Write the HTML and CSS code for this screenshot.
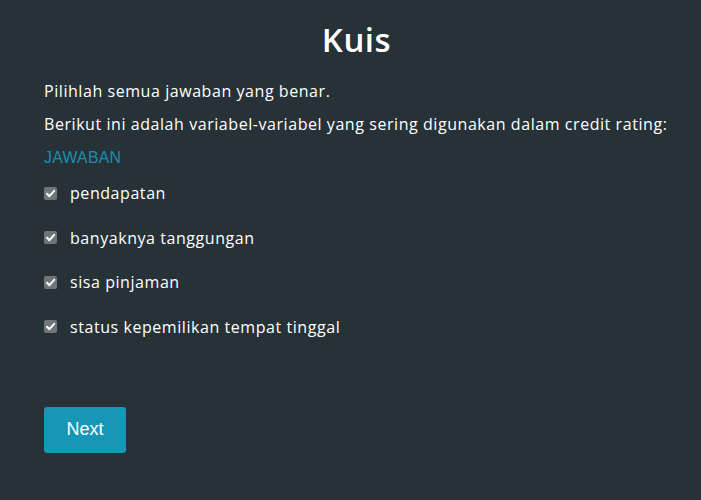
FILE: index.html
```html
<!DOCTYPE html>
<html lang="id">
<head>
<meta charset="utf-8">
<title>Kuis</title>
<link rel="stylesheet" href="styles.css">
</head>
<body>
<main class="quiz">
  <h1 class="title">Kuis</h1>
  <p class="text">Pilihlah semua jawaban yang benar.</p>
  <p class="text">Berikut ini adalah variabel-variabel yang sering digunakan dalam credit rating:</p>
  <div class="answer-label">JAWABAN</div>
  <ul class="options">
    <li class="option"><span class="check"><svg viewBox="0 0 13 13" width="13" height="13"><path d="M3 6.8 L5.4 9.2 L10.2 3.8" fill="none" stroke="#fff" stroke-width="2" stroke-linecap="round" stroke-linejoin="round"/></svg></span><span>pendapatan</span></li>
    <li class="option"><span class="check"><svg viewBox="0 0 13 13" width="13" height="13"><path d="M3 6.8 L5.4 9.2 L10.2 3.8" fill="none" stroke="#fff" stroke-width="2" stroke-linecap="round" stroke-linejoin="round"/></svg></span><span>banyaknya tanggungan</span></li>
    <li class="option"><span class="check"><svg viewBox="0 0 13 13" width="13" height="13"><path d="M3 6.8 L5.4 9.2 L10.2 3.8" fill="none" stroke="#fff" stroke-width="2" stroke-linecap="round" stroke-linejoin="round"/></svg></span><span>sisa pinjaman</span></li>
    <li class="option"><span class="check"><svg viewBox="0 0 13 13" width="13" height="13"><path d="M3 6.8 L5.4 9.2 L10.2 3.8" fill="none" stroke="#fff" stroke-width="2" stroke-linecap="round" stroke-linejoin="round"/></svg></span><span>status kepemilikan tempat tinggal</span></li>
  </ul>
  <button class="next" type="button">Next</button>
</main>
</body>
</html>
```

FILE: styles.css
```css
html, body {
  margin: 0;
  padding: 0;
  background: #263238;
}
body {
  font-family: "Open Sans", "DejaVu Sans", sans-serif;
  color: #ffffff;
}
.quiz {
  padding: 16px 32px 0 44px;
}
.title {
  margin: 0 0 15px;
  text-align: center;
  font-size: 33px;
  line-height: 48px;
  font-weight: 600;
  letter-spacing: 0.5px;
}
.text {
  margin: 0 0 9px;
  font-size: 16px;
  line-height: 24px;
  font-weight: 500;
  letter-spacing: 0.56px;
  white-space: nowrap;
}
.answer-label {
  margin-top: 12px;
  font-family: "Liberation Sans", Arial, sans-serif;
  font-size: 15.8px;
  line-height: 20px;
  color: #1a8fad;
  letter-spacing: 0.3px;
}
.options {
  list-style: none;
  margin: 13px 0 0;
  padding: 0;
  display: flex;
  flex-direction: column;
  gap: 20.5px;
}
.option {
  display: flex;
  align-items: center;
  gap: 13px;
  font-size: 16px;
  line-height: 24px;
  font-weight: 500;
  letter-spacing: 0.56px;
}
.check {
  width: 13px;
  height: 13px;
  border-radius: 2px;
  background: #727577;
  display: flex;
}
.next {
  margin-top: 68px;
  width: 82px;
  height: 46px;
  border: 0;
  border-radius: 3px;
  background: #1796b5;
  color: #ffffff;
  font-family: "Liberation Sans", Arial, sans-serif;
  font-size: 18px;
  cursor: pointer;
}
```
